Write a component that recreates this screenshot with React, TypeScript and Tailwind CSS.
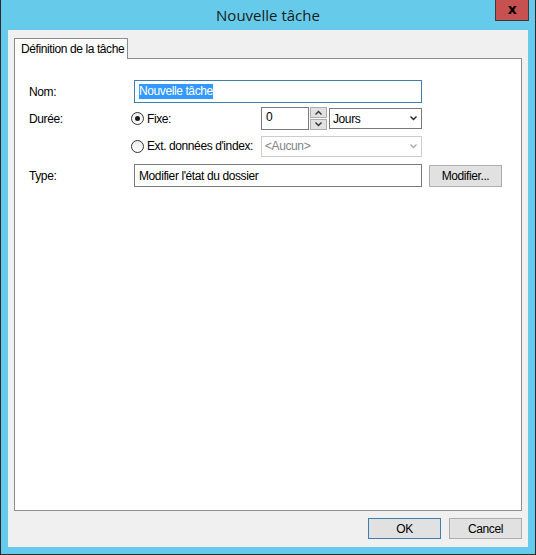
import React from "react";

const Chevron = ({ up = false, color = "#333" }: { up?: boolean; color?: string }) => (
  <svg width="7" height="5" viewBox="0 0 7 5" className={up ? "rotate-180" : ""}>
    <path d="M0.5 0.5 L3.5 3.5 L6.5 0.5" fill="none" stroke={color} strokeWidth="1.4" />
  </svg>
);

const Radio = ({ checked }: { checked?: boolean }) => (
  <span className="flex h-[13px] w-[13px] shrink-0 items-center justify-center rounded-full border border-[#333] bg-gradient-to-b from-[#ececec] to-white">
    {checked && <span className="h-[5px] w-[5px] rounded-full bg-[#1a1a1a]" />}
  </span>
);

export default function App() {
  return (
    <div className="flex h-[555px] w-[536px] flex-col whitespace-nowrap border-x border-b border-[#2b2b2b] bg-[#66cbea] font-['Liberation_Sans',Arial,sans-serif] text-[12px] tracking-[-0.4px] text-black">
      {/* title bar */}
      <div className="relative flex h-[30px] shrink-0 items-center justify-center">
        <span className="font-['Open_Sans','Noto_Sans',sans-serif] text-[15px] tracking-normal text-[#1b1b1b]">Nouvelle tâche</span>
        <button className="absolute right-[6px] top-0 flex h-[21px] w-[34px] items-center justify-center border-x border-b border-[#3b3b3b] bg-[#c75050] pb-[2px] font-['DejaVu_Sans',sans-serif] text-[14px] font-bold leading-none text-black">
          x
        </button>
      </div>

      {/* client area */}
      <div className="mx-[7px] mb-[7px] flex flex-1 flex-col bg-[#f0f0f0] px-[6px] pt-[8px]">
        <div className="flex">
          <div className="relative z-10 -mb-px flex h-[21px] w-[114px] items-center border-x border-t border-[#898c95] bg-white pl-[6px]">
            Définition de la tâche
          </div>
        </div>

        <div className="flex h-[453px] flex-col border border-[#898c95] bg-white pl-[14px] pt-[21px]">
          {/* Nom */}
          <div className="flex h-[23px] items-center">
            <span className="w-[105px]">Nom:</span>
            <div className="flex h-[23px] w-[288px] items-center border border-[#3c7fb1] px-[4px]">
              <span className="bg-[#3399ff] leading-[15px] text-white">Nouvelle tâche</span>
            </div>
          </div>

          {/* Durée - fixe */}
          <div className="mt-[4px] flex h-[23px] items-center">
            <span className="w-[102px]">Durée:</span>
            <div className="flex w-[130px] items-center gap-[3px]">
              <Radio checked />
              <span>Fixe:</span>
            </div>
            <div className="flex h-[23px] w-[48px] items-center border border-[#7a7a7a] px-[4px] pb-[3px]">0</div>
            <div className="ml-[1px] flex h-[23px] w-[17px] flex-col justify-between">
              <div className="flex h-[11px] items-center justify-center border border-[#adadad] bg-[#e1e1e1]">
                <Chevron up />
              </div>
              <div className="flex h-[11px] items-center justify-center border border-[#adadad] bg-[#e1e1e1]">
                <Chevron />
              </div>
            </div>
            <div className="ml-[2px] flex h-[21px] w-[93px] items-center justify-between border border-[#7a7a7a] bg-white pl-[3px] pr-[4px]">
              <span>Jours</span>
              <Chevron color="#222" />
            </div>
          </div>

          {/* Ext. données d'index */}
          <div className="mt-[5px] flex h-[22px] items-center">
            <span className="w-[102px]" />
            <div className="flex w-[130px] items-center gap-[3px]">
              <Radio />
              <span>Ext. données d'index:</span>
            </div>
            <div className="flex h-[21px] w-[161px] items-center justify-between border border-[#cccccc] bg-white pl-[3px] pr-[4px] text-[#838383]">
              <span>&lt;Aucun&gt;</span>
              <Chevron color="#aaa" />
            </div>
          </div>

          {/* Type */}
          <div className="mt-[7px] flex h-[23px] items-center">
            <span className="w-[105px]">Type:</span>
            <div className="flex h-[23px] w-[288px] items-center border border-[#7a7a7a] px-[4px]">
              Modifier l'état du dossier
            </div>
            <button className="ml-[7px] flex h-[22px] w-[73px] items-center justify-center border border-[#adadad] bg-[#e1e1e1]">
              Modifier...
            </button>
          </div>
        </div>

        <div className="mt-[7px] flex justify-end gap-[8px]">
          <button className="flex h-[21px] w-[73px] items-center justify-center border border-[#3c7fb1] bg-[#e1e1e1]">OK</button>
          <button className="flex h-[21px] w-[73px] items-center justify-center border border-[#adadad] bg-[#e1e1e1]">
            Cancel
          </button>
        </div>
      </div>
    </div>
  );
}
